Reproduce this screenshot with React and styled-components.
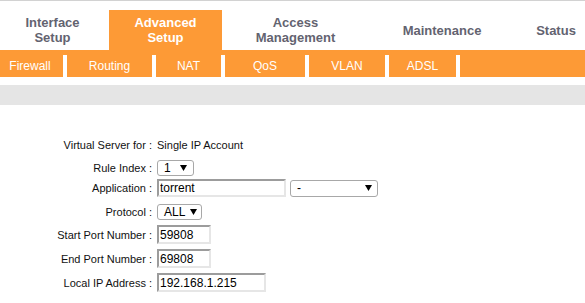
import React from 'react';
import styled, { createGlobalStyle } from 'styled-components';

const ORANGE = '#fd9a36';

const Global = createGlobalStyle`
  html, body { margin: 0; padding: 0; background: #fff; overflow: hidden; }
  body { font-family: "Liberation Sans", Arial, sans-serif; }
`;

const Page = styled.div`
  width: 585px;
  height: 303px;
  overflow: hidden;
  border-top: 1px solid #d2d2d2;
  box-sizing: border-box;
`;

const TabRow = styled.div`
  display: flex;
  height: 40px;
  margin-top: 9px;
  overflow: hidden;
`;

const Tab = styled.div`
  flex: 0 0 ${p => p.$w}px;
  margin-right: ${p => p.$mr || 0}px;
  display: flex;
  align-items: center;
  justify-content: center;
  text-align: center;
  font-weight: bold;
  font-size: 13px;
  line-height: 15px;
  color: ${p => (p.$active ? '#fff' : '#636370')};
  background: ${p => (p.$active ? ORANGE : 'transparent')};
`;

const SubNav = styled.div`
  display: flex;
  align-items: flex-end;
  height: 27px;
  background: ${ORANGE};
`;

const SubItem = styled.div`
  flex: 0 0 ${p => p.$w}px;
  height: 22px;
  border-right: 4px solid #fff;
  display: flex;
  align-items: center;
  justify-content: center;
  padding-right: ${p => p.$pr || 0}px;
  box-sizing: content-box;
  color: #fff;
  font-size: 12px;
`;

const Band = styled.div`
  margin-top: 8px;
  height: 20px;
  background: #e5e5e5;
`;

const Form = styled.div`
  display: flex;
  flex-direction: column;
  padding-top: 30px;
`;

const Row = styled.div`
  display: grid;
  grid-template-columns: 154px auto;
  column-gap: 3px;
  align-items: center;
  height: ${p => p.$h}px;
  margin-top: ${p => p.$mt || 0}px;
`;

const Label = styled.div`
  text-align: right;
  padding-right: 2px;
  font-size: 11px;
  color: #111;
  white-space: nowrap;
`;

const Value = styled.div`
  display: flex;
  align-items: center;
  gap: 4px;
  font-size: 11px;
  color: #111;
`;

const TextInput = styled.input`
  width: ${p => p.$w}px;
  height: ${p => p.$h || 19}px;
  box-sizing: border-box;
  border-style: solid;
  border-width: 2px;
  border-color: #9c9c9c #e6e6e6 #e6e6e6 #9c9c9c;
  padding: 0 1px;
  margin: 0;
  font-family: "Liberation Sans", Arial, sans-serif;
  font-size: 12px;
  color: #000;
  outline: none;
  background: #fff;
`;

const SelectBox = styled.div`
  width: ${p => p.$w}px;
  height: ${p => p.$h || 16}px;
  box-sizing: border-box;
  border: 1px solid #a8a8a8;
  border-radius: 3px;
  display: flex;
  align-items: center;
  justify-content: space-between;
  padding: 0 ${p => p.$pr || 6}px 0 6px;
  font-size: 12px;
  color: #000;
  background: #fff;
`;

const Arrow = () => (
  <svg width="7" height="6" viewBox="0 0 7 6">
    <polygon points="0,0 7,0 3.5,6" fill="#000" />
  </svg>
);

const Select = ({ value, w, h, pr }) => (
  <SelectBox $w={w} $h={h} $pr={pr}>
    <span>{value}</span>
    <Arrow />
  </SelectBox>
);

const tabs = [
  { label: ['Interface', 'Setup'], w: 105, mr: 4 },
  { label: ['Advanced', 'Setup'], w: 113, active: true },
  { label: ['Access', 'Management'], w: 147 },
  { label: ['Maintenance'], w: 146 },
  { label: ['Status'], w: 82 },
];

const subs = [
  { label: 'Firewall', w: 60, pr: 3 },
  { label: 'Routing', w: 85 },
  { label: 'NAT', w: 65 },
  { label: 'QoS', w: 80 },
  { label: 'VLAN', w: 76 },
  { label: 'ADSL', w: 67 },
];

export default function App() {
  return (
    <Page>
      <Global />
      <TabRow>
        {tabs.map(t => (
          <Tab key={t.label.join(' ')} $w={t.w} $mr={t.mr} $active={t.active}>
            <div>
              {t.label.map((l, i) => (
                <div key={i}>{l}</div>
              ))}
            </div>
          </Tab>
        ))}
      </TabRow>
      <SubNav>
        {subs.map(s => (
          <SubItem key={s.label} $w={s.w} $pr={s.pr}>
            {s.label}
          </SubItem>
        ))}
      </SubNav>
      <Band />
      <Form>
        <Row $h={20}>
          <Label>Virtual Server for :</Label>
          <Value>Single IP Account</Value>
        </Row>
        <Row $h={16} $mt={5}>
          <Label>Rule Index :</Label>
          <Value>
            <Select value="1" w={37} />
          </Value>
        </Row>
        <Row $h={18} $mt={3}>
          <Label>Application :</Label>
          <Value>
            <TextInput $w={129} $h={18} defaultValue="torrent" />
            <Select value="-" w={88} h={17} pr={5} />
          </Value>
        </Row>
        <Row $h={16} $mt={7}>
          <Label>Protocol :</Label>
          <Value>
            <Select value="ALL" w={45} pr={4} />
          </Value>
        </Row>
        <Row $h={19} $mt={5}>
          <Label>Start Port Number :</Label>
          <Value>
            <TextInput $w={54} defaultValue="59808" />
          </Value>
        </Row>
        <Row $h={19} $mt={5}>
          <Label>End Port Number :</Label>
          <Value>
            <TextInput $w={54} defaultValue="69808" />
          </Value>
        </Row>
        <Row $h={19} $mt={5}>
          <Label>Local IP Address :</Label>
          <Value>
            <TextInput $w={109} defaultValue="192.168.1.215" />
          </Value>
        </Row>
      </Form>
    </Page>
  );
}
